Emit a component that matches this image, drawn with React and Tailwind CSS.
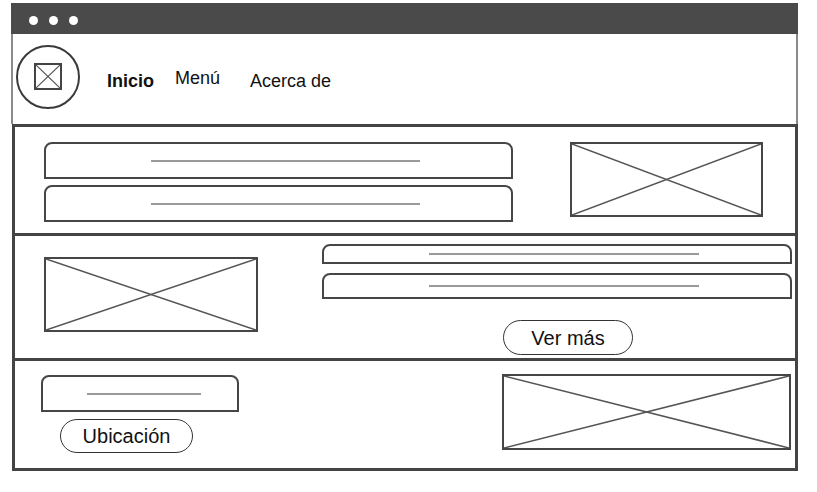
import React from "react";

function Ph({ className }) {
  return (
    <div className={"relative shrink-0 border-2 border-[#464646] bg-white " + className}>
      <svg className="absolute inset-0 h-full w-full" viewBox="0 0 100 100" preserveAspectRatio="none">
        <line x1="0" y1="0" x2="100" y2="100" stroke="#555" strokeWidth="1.6" vectorEffect="non-scaling-stroke" />
        <line x1="100" y1="0" x2="0" y2="100" stroke="#555" strokeWidth="1.6" vectorEffect="non-scaling-stroke" />
      </svg>
    </div>
  );
}

function Bar({ className, lineClass }) {
  return (
    <div className={"flex shrink-0 items-center rounded-t-[8px] border-2 border-[#464646] bg-white " + className}>
      <div className={"h-[2px] bg-[#9a9a9a] " + lineClass} />
    </div>
  );
}

export default function App() {
  return (
    <div className="min-h-[492px] w-[817px] bg-white pl-[11px] pt-[3px] text-[#111]" style={{ fontFamily: '"Liberation Sans", Arial, sans-serif' }}>
      <div className="w-[787px]">
        {/* top bar */}
        <div className="flex h-[31px] items-start gap-[11px] bg-[#4a4a4a] pl-[18px] pt-[13px]">
          <div className="h-[9px] w-[9px] rounded-full bg-white" />
          <div className="h-[9px] w-[9px] rounded-full bg-white" />
          <div className="h-[9px] w-[9px] rounded-full bg-white" />
        </div>
        {/* header */}
        <div className="flex h-[90px] items-start border-x-2 border-[#8a8a8a] bg-white">
          <div className="ml-[3px] mt-[11px] flex h-[64px] w-[64px] shrink-0 items-center justify-center rounded-full border-2 border-[#3a3a3a]">
            <div className="relative mb-[1px] h-[27px] w-[28px] border-2 border-[#444]">
              <svg className="absolute inset-0 h-full w-full" viewBox="0 0 100 100" preserveAspectRatio="none">
                <line x1="0" y1="0" x2="100" y2="100" stroke="#555" strokeWidth="1.2" vectorEffect="non-scaling-stroke" />
                <line x1="100" y1="0" x2="0" y2="100" stroke="#555" strokeWidth="1.2" vectorEffect="non-scaling-stroke" />
              </svg>
            </div>
          </div>
          <span className="ml-[27px] mt-[37px] text-[18px] font-bold leading-[20px]">Inicio</span>
          <span className="ml-[21px] mt-[34px] text-[18px] leading-[20px]">Menú</span>
          <span className="ml-[30px] mt-[37px] text-[18px] leading-[20px]">Acerca de</span>
        </div>
        {/* sections */}
        <div className="ml-[1px] w-[786px] divide-y-[3px] divide-[#444] border-[3px] border-[#444] bg-white">
          {/* section 1 */}
          <div className="flex h-[109px] items-start pl-[29px] pt-[15px]">
            <div className="flex w-[469px] flex-col gap-[6px]">
              <Bar className="h-[37px] w-[469px]" lineClass="ml-[105px] w-[269px]" />
              <Bar className="h-[37px] w-[469px]" lineClass="ml-[105px] w-[269px]" />
            </div>
            <Ph className="ml-[57px] h-[75px] w-[193px]" />
          </div>
          {/* section 2 */}
          <div className="flex h-[125px] items-start pl-[29px] pt-[8px]">
            <Ph className="mt-[13px] h-[75px] w-[214px]" />
            <div className="ml-[64px] flex w-[470px] flex-col">
              <Bar className="h-[20px] w-[470px] rounded-t-[6px]" lineClass="ml-[105px] w-[270px]" />
              <Bar className="mt-[9px] h-[26px] w-[470px] rounded-t-[6px]" lineClass="ml-[105px] w-[270px]" />
              <div className="ml-[181px] mt-[21px] flex h-[35px] w-[130px] items-center justify-center rounded-full border-[1.5px] border-[#333] text-[20px] leading-none">
                Ver más
              </div>
            </div>
          </div>
          {/* section 3 */}
          <div className="flex h-[107px] items-start pl-[26px] pt-[13px]">
            <div className="flex flex-col">
              <Bar className="mt-[1px] h-[37px] w-[198px]" lineClass="ml-[44px] w-[114px]" />
              <div className="ml-[19px] mt-[7px] flex h-[34px] w-[133px] items-center justify-center rounded-full border-[1.5px] border-[#333] text-[20px] leading-none">
                Ubicación
              </div>
            </div>
            <Ph className="ml-[263px] h-[76px] w-[289px]" />
          </div>
        </div>
      </div>
    </div>
  );
}
